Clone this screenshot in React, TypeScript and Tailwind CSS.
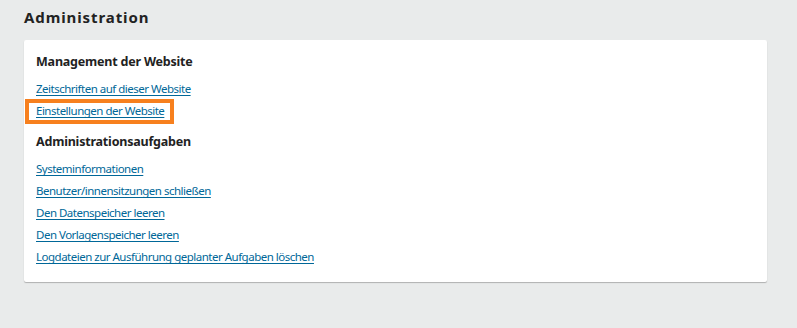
import React from "react";

const managementLinks = ["Zeitschriften auf dieser Website", "Einstellungen der Website"];

const adminLinks = [
  "Systeminformationen",
  "Benutzer/innensitzungen schließen",
  "Den Datenspeicher leeren",
  "Den Vorlagenspeicher leeren",
  "Logdateien zur Ausführung geplanter Aufgaben löschen",
];

const LinkItem = ({ label, highlight }: { label: string; highlight?: boolean }) => (
  <li className="h-[22px] flex items-center">
    {highlight ? (
      <span className="-ml-[11px] -my-[2px] border-[4px] border-[#f7801e] pl-[7px] pr-[6px] h-[25px] flex items-center">
        <a href="#" className="text-[#006798] underline underline-offset-2">
          {label}
        </a>
      </span>
    ) : (
      <a href="#" className="text-[#006798] underline underline-offset-2">
        {label}
      </a>
    )}
  </li>
);

export default function App() {
  return (
    <div
      className="w-[797px] h-[328px] bg-[#e9ebeb] px-6 pt-[7px] text-[11.5px] tracking-[-0.5px] text-[#222]"
      style={{ fontFamily: '"Noto Sans", sans-serif' }}
    >
      <h1 className="text-[15px] tracking-[0.9px] font-bold h-[20px] leading-[20px]">Administration</h1>
      <div className="mt-[13px] w-[743px] bg-white rounded-[2px] shadow-[0_1px_1px_rgba(0,0,0,0.25)] px-3 pt-[12px] pb-[14px]">
        <h2 className="text-[12.5px] tracking-[-0.2px] font-bold leading-[20px] mb-[6px]">Management der Website</h2>
        <ul>
          {managementLinks.map((l, i) => (
            <LinkItem key={l} label={l} highlight={i === 1} />
          ))}
        </ul>
        <h2 className="text-[12.5px] tracking-[-0.2px] font-bold leading-[20px] mt-[10px] mb-[6px]">Administrationsaufgaben</h2>
        <ul>
          {adminLinks.map((l) => (
            <LinkItem key={l} label={l} />
          ))}
        </ul>
      </div>
    </div>
  );
}
